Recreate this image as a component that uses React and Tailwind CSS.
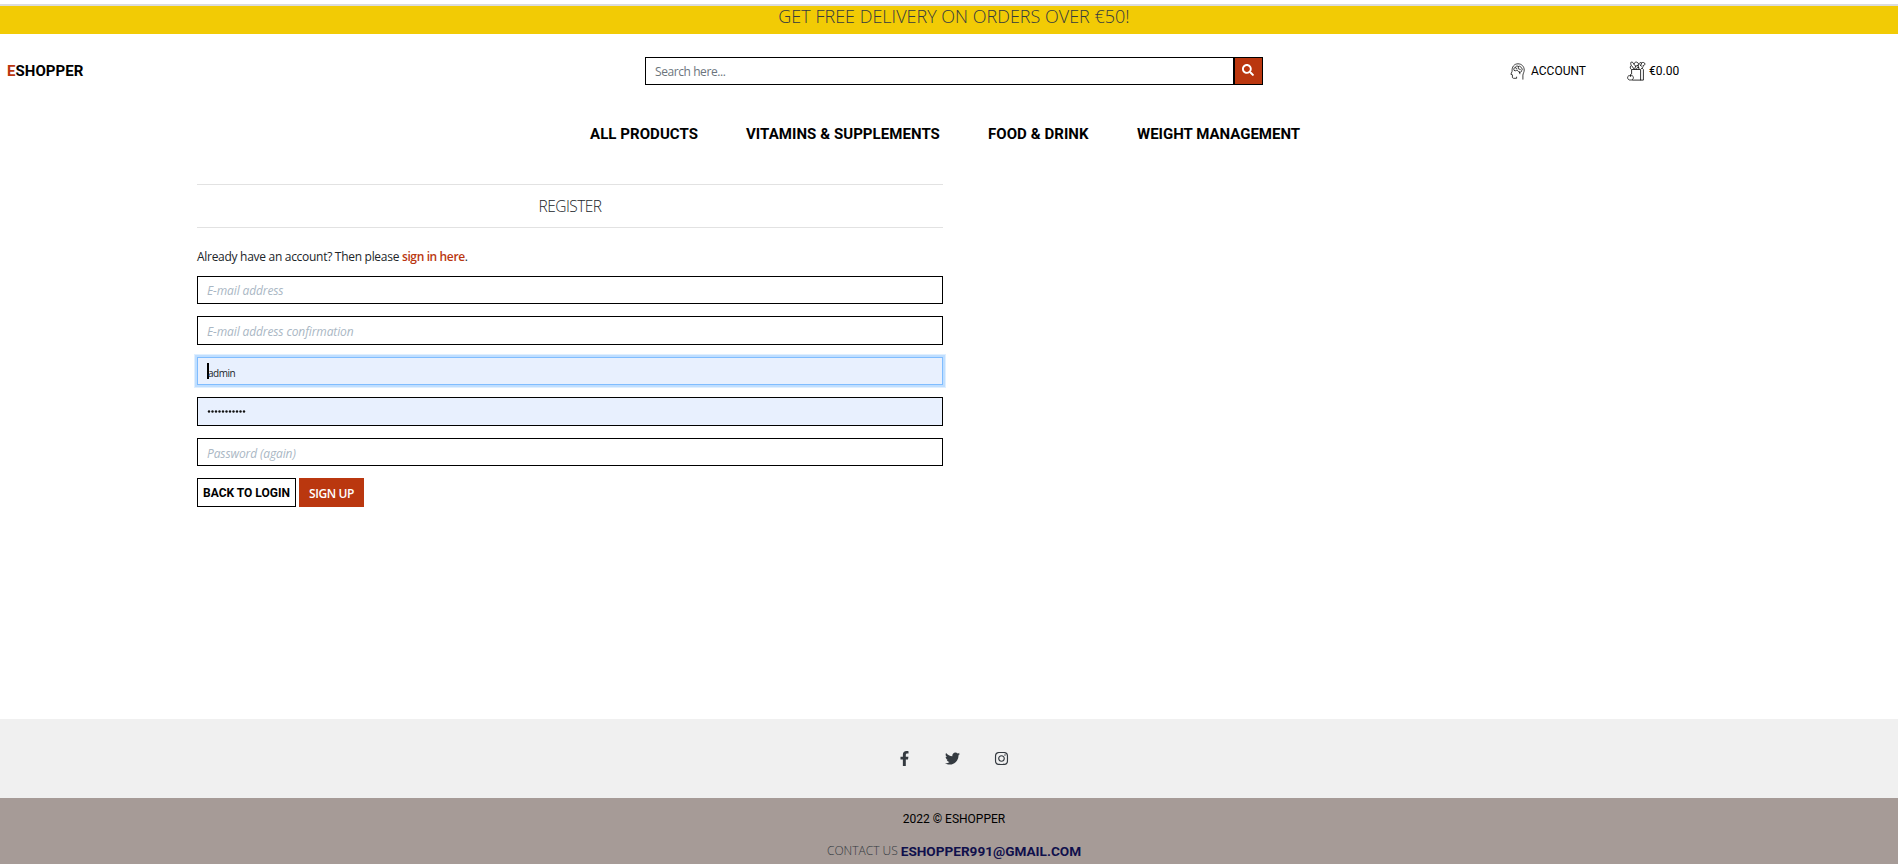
import React from "react";
import { FaFacebookF, FaTwitter, FaInstagram, FaSearch } from "react-icons/fa";

const roboto = "font-['Roboto',sans-serif]";

function HeadIcon() {
  return (
    <svg className="h-[17px] w-[15px]" viewBox="0 0 15 17" fill="none" stroke="#111" strokeWidth="0.8" strokeLinecap="round" strokeLinejoin="round">
      <path d="M6.600 14.100v1.200H3.600c-.9 0-1.200-.5-1.200-1.300v-2.200L.9 11.300l1.200-3C1.700 3.800 4.300.8 8 .8c3.600 0 6.200 2.700 6.200 6.200 0 2.200-1.100 3.300-1.300 5.100v4.100" />
      <path d="M4.200 7.400c-1-1.200-.2-2.700 1-2.800.4-1.500 2.100-2 3.100-1.100 1.200-.8 2.700 0 2.800 1.200 1.300.4 1.500 2 .6 2.800.1 1.300-1.100 2.100-2.200 1.700M4.200 7.400c.9.9 2.100.3 2.700-.3M5.200 4.600l1.500.9M8.300 3.500v2.200l2 .8M7 7.100l1.400 1.500 1.100.6M9.500 9.200l.4 1.600" />
    </svg>
  );
}

function BagIcon() {
  return (
    <svg className="h-[20px] w-[19px]" viewBox="0 0 19 20" fill="none" stroke="#111" strokeWidth="0.85" strokeLinecap="round" strokeLinejoin="round">
      <path d="M4.600 13V8.500h9v10.600H5.500M13.600 19.100h2.800V8.500l-1.200-1.200" />
      <path d="M3.500 14.800c-1.500-.7-2.900.2-2.900 1.700 0 1.600 1.200 2.800 2.900 2.500 1.700.3 2.900-.9 2.900-2.500 0-1.500-1.400-2.400-2.900-1.700zM3.500 14.800v-1.200" />
      <path d="M4 8.200C2.700 6.800 3 5 4.400 4.700 3.500 3 3.500 1.800 4.300 1c1.500.1 2.300 1 2.500 2.100C7.700 1 9.300.6 10.700 1.600c1 .7.900 2 .3 2.900M6.800 3.100l1.800 2.100 2.400-.7M5 5.200l2.100 2.900M8.600 5.200l-.8 2.600M11 4.500l1 3.400M9.500 8.100c.1-1.400 1-2.100 2.300-1.500M12 3.300c.2-1.700 1.400-2.300 2.600-1.300 1.100-1.100 3.300-.5 3.300.9 0 1.100-.9 1.700-1.900 1.600.5 1.500-.4 2.700-1.600 3M13.200 4l1.300 1.200M14.600 2l-.9 2.500" />
    </svg>
  );
}

function Field({ children, className }) {
  return <div className={`flex w-full items-center border px-[9px] ${className}`}>{children}</div>;
}

export default function App() {
  return (
    <div className="flex h-[864px] w-full flex-col overflow-hidden bg-white pt-1 font-['Open_Sans','Noto_Sans',sans-serif] text-[12px] text-[#212529]">
      <div className="flex h-[30px] shrink-0 justify-center border-t-2 border-[#dcdcdc] bg-[#f2cb05]">
        <p className="mt-[-2px] whitespace-nowrap pl-[10px] text-[18px] font-light leading-[24px] text-[#343a40]">GET FREE DELIVERY ON ORDERS OVER €50!</p>
      </div>

      <header className={`flex h-[74px] shrink-0 items-start pt-[23px] ${roboto}`}>
        <div className="w-[645px] pl-[7px] pt-[2px] text-[15px] font-bold leading-[24px] tracking-[0.06px] text-black">
          <span className="text-[#ba370f]">E</span>SHOPPER
        </div>
        <div className="flex h-[28px] w-[618px]">
          <div className="flex w-[589px] items-center border border-black pl-[9px] pt-[2px] font-['Open_Sans',sans-serif] text-[12px] tracking-[-0.42px] text-[#6c757d]">Search here...</div>
          <button className="flex w-[29px] items-center justify-center border border-black bg-[#ba370f] pb-[2px] pr-[2px] text-white"><FaSearch size={12} /></button>
        </div>
        <div className="ml-[247px] flex h-[28px] w-[117px] items-center text-[12px] text-black">
          <HeadIcon /><span className="ml-[6px]">ACCOUNT</span>
        </div>
        <div className="flex h-[28px] items-center text-[12px] text-black">
          <BagIcon /><span className="ml-[3px]">€0.00</span>
        </div>
      </header>

      <nav className={`flex h-[76px] shrink-0 pl-[590px] pt-[14px] text-[15px] font-bold leading-[24px] tracking-[0.06px] text-black ${roboto}`}>
        <a className="w-[156px]">ALL PRODUCTS</a>
        <a className="w-[242px]">VITAMINS &amp; SUPPLEMENTS</a>
        <a className="w-[149px]">FOOD &amp; DRINK</a>
        <a className="tracking-normal">WEIGHT MANAGEMENT</a>
      </nav>

      <main className="ml-[197px] flex h-[535px] w-[746px] shrink-0 flex-col">
        <h1 className="flex h-[44px] items-center justify-center border-y border-[#e2e2e2] pt-[1px] text-[15.5px] font-[350] tracking-[-0.55px] text-[#212529]">REGISTER</h1>
        <p className="mt-[20px] h-[28px] text-[12px] leading-[18px] tracking-[-0.29px]">Already have an account? Then please <a className="font-semibold tracking-[-0.37px] text-[#ba370f]">sign in here</a>.</p>
        <Field className="h-[28px] border-black pt-[2px] italic tracking-[-0.12px] text-[#aab7c4]">E-mail address</Field>
        <Field className="mt-[12px] h-[29px] border-black pt-[2px] italic tracking-[-0.12px] text-[#aab7c4]">E-mail address confirmation</Field>
        <Field className="mt-[12px] h-[28px] border-[#80bdff] bg-[#e8f0fe] text-[10px] shadow-[0_0_0_2px_#bfdeff,0_0_0_3px_#dfefff]">
          <span className="h-[16px] w-[2px] bg-black" /><span className="-ml-[1px] pt-[4px] tracking-[-0.5px]">admin</span>
        </Field>
        <Field className="mt-[12px] h-[29px] border-black bg-[#e8f0fe]">
          <svg className="h-[3px] w-[40px]" viewBox="0 0 40 3" fill="#111">
            {Array.from({ length: 11 }, (_, i) => <circle key={i} cx={2 + i * 3.5} cy="1.5" r="1.200" />)}
          </svg>
        </Field>
        <Field className="mt-[12px] h-[28px] border-black pt-[3px] italic tracking-[-0.12px] text-[#aab7c4]">Password (again)</Field>
        <div className="mt-[12px] flex h-[29px] gap-[3px]">
          <button className={`w-[99px] border border-black pt-[1px] text-[12px] font-bold text-black ${roboto}`}>BACK TO LOGIN</button>
          <button className="w-[65px] bg-[#ba370f] pt-[3px] text-[12px] font-semibold tracking-[-0.4px] text-white">SIGN UP</button>
        </div>
      </main>

      <div className="flex h-[79px] shrink-0 items-center bg-[#f0f0f0] pl-[897px] text-[#343a40]">
        <FaFacebookF size={15} /><FaTwitter size={15} className="ml-[33px]" /><FaInstagram size={15} className="ml-[34px]" />
      </div>
      <footer className="flex h-[66px] shrink-0 flex-col items-center bg-[#a69b97] pt-[11px] text-[12px]">
        <p className={`pl-[10px] leading-[20px] text-black ${roboto}`}>2022 © ESHOPPER</p>
        <p className="mt-[12px] flex gap-[3px] pl-[10px] leading-[20px]">
          <span className="font-light text-[#343a40]">CONTACT US</span>
          <span className={`text-[13.6px] font-bold text-[#10104c] ${roboto}`}>ESHOPPER991@GMAIL.COM</span>
        </p>
      </footer>
    </div>
  );
}
